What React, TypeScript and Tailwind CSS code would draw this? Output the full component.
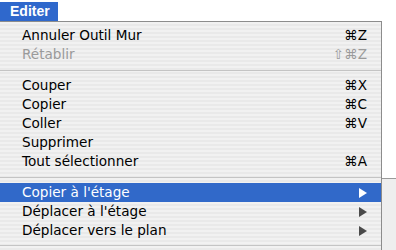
type Item =
  | { kind: "sep" }
  | { kind: "item"; label: string; shortcut?: string; disabled?: boolean; submenu?: boolean; active?: boolean };

const items: Item[] = [
  { kind: "item", label: "Annuler Outil Mur", shortcut: "⌘Z" },
  { kind: "item", label: "Rétablir", shortcut: "⇧⌘Z", disabled: true },
  { kind: "sep" },
  { kind: "item", label: "Couper", shortcut: "⌘X" },
  { kind: "item", label: "Copier", shortcut: "⌘C" },
  { kind: "item", label: "Coller", shortcut: "⌘V" },
  { kind: "item", label: "Supprimer" },
  { kind: "item", label: "Tout sélectionner", shortcut: "⌘A" },
  { kind: "sep" },
  { kind: "item", label: "Copier à l'étage", submenu: true, active: true },
  { kind: "item", label: "Déplacer à l'étage", submenu: true },
  { kind: "item", label: "Déplacer vers le plan", submenu: true },
];

const Arrow = ({ white }: { white?: boolean }) => (
  <svg width="8" height="10" viewBox="0 0 8 10">
    <path d="M0 0 L8 5 L0 10 Z" fill={white ? "#ffffff" : "#4a4a4a"} />
  </svg>
);

export default function App() {
  return (
    <div className="w-[396px] h-[250px] bg-white overflow-hidden flex flex-col text-[13.6px] [font-family:DejaVu_Sans,Liberation_Sans,sans-serif]">
      <div className="h-[21px] flex shrink-0">
        <div className="w-[58px] mt-[2px] bg-[#2f68cc] text-white font-bold flex items-center pl-[10px] text-[14px] [font-family:Liberation_Sans,Arial,sans-serif]">
          Editer
        </div>
      </div>
      <div className="flex flex-1">
        <div className="w-[382px] border-t border-r border-[#8c8c8c] bg-[repeating-linear-gradient(180deg,#f1f1f1_0px,#f1f1f1_2px,#e9e9e9_2px,#e9e9e9_4px)] pt-[4px] flex flex-col">
          {items.map((it, i) =>
            it.kind === "sep" ? (
              <div key={i} className="h-[12px] flex items-center">
                <div className="h-px w-full bg-[#c4c4c4]" />
              </div>
            ) : (
              <div
                key={i}
                className={`h-[19px] flex items-center justify-between pl-[22px] pr-[14px] ${
                  it.active ? "bg-[#3169c9] text-white" : it.disabled ? "text-[#9a9a9a]" : "text-black"
                }`}
              >
                <span>{it.label}</span>
                {it.shortcut && (
                  <span className={it.disabled ? "text-[#9a9a9a]" : "text-black"}>{it.shortcut}</span>
                )}
                {it.submenu && <Arrow white={it.active} />}
              </div>
            )
          )}
          <div className="h-[10px] flex items-end pb-[4px]">
            <div className="h-px w-full bg-[#c4c4c4]" />
          </div>
        </div>
        <div className="flex-1 flex flex-col">
          <div className="h-[157px] bg-white" />
          <div className="flex-1 border-t border-[#9a9a9a] bg-[#eeeeee]" />
        </div>
      </div>
    </div>
  );
}
